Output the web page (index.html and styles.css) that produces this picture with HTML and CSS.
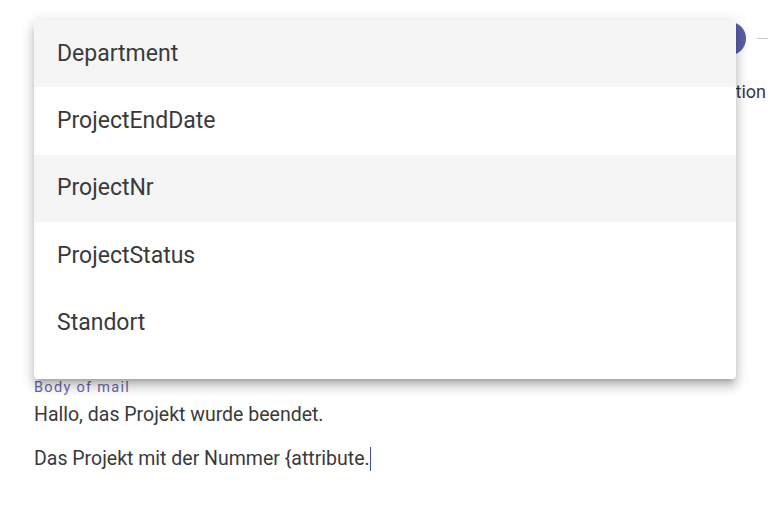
FILE: index.html
```html
<!DOCTYPE html>
<html lang="en">
<head>
    <meta charset="UTF-8">
    <meta name="viewport" content="width=device-width, initial-scale=1.0">
    <title>Mail Template</title>
    <link rel="stylesheet" href="styles.css">
</head>
<body>
    <div class="page">
        <div class="stepper">
            <span class="step-circle"></span>
            <span class="step-line"></span>
        </div>
        <div class="step-labels">
            <span class="step-label">Notification</span>
        </div>

        <div class="mail-body">
            <label class="field-label">Body of mail</label>
            <p class="mail-line">Hallo, das Projekt wurde beendet.</p>
            <p class="mail-line">Das Projekt mit der Nummer {attribute.<span class="caret"></span></p>
        </div>
    </div>

    <div class="menu">
        <div class="menu-item active">Department</div>
        <div class="menu-item">ProjectEndDate</div>
        <div class="menu-item active">ProjectNr</div>
        <div class="menu-item">ProjectStatus</div>
        <div class="menu-item">Standort</div>
    </div>
</body>
</html>
```

FILE: styles.css
```css
body { margin: 0; font-family: Roboto, "Liberation Sans", sans-serif; color: #3a3a3a; background: #fff; overflow: hidden; }
.page { height: 507px; }

.stepper { height: 76px; display: flex; align-items: center; justify-content: flex-end; gap: 11px; }
.step-circle { width: 32px; height: 33px; border-radius: 50%; background: #5a5ea8; }
.step-line { width: 11px; height: 1px; background: #c8c8c8; }

.step-labels { display: flex; justify-content: flex-end; padding-right: 2px; margin-top: 5px; }
.step-label { font-size: 18px; color: #3a3a3a; }

.mail-body { padding: 277px 34px 0; }
.field-label { display: block; font-size: 14.5px; letter-spacing: 1.3px; color: #6767ad; line-height: 18px; }
.mail-line { margin: 6px 0 0; font-size: 19.5px; line-height: 24px; }
.mail-line + .mail-line { margin-top: 20px; }
.caret { display: inline-block; width: 1px; height: 24px; background: #4a4aa8; vertical-align: -6px; }

.menu { position: absolute; left: 34px; top: 20px; width: 702px; padding-bottom: 22px; background: #fff; border-radius: 4px;
    box-shadow: 0 5px 5px -3px rgba(0,0,0,0.2), 0 8px 10px 1px rgba(0,0,0,0.14), 0 3px 14px 2px rgba(0,0,0,0.12); }
.menu-item { height: 67.4px; box-sizing: border-box; padding: 0 0 1px 23px; display: flex; align-items: center; font-size: 23px; color: #3a3a3a; }
.menu-item.active { background: #f5f5f5; }
```
